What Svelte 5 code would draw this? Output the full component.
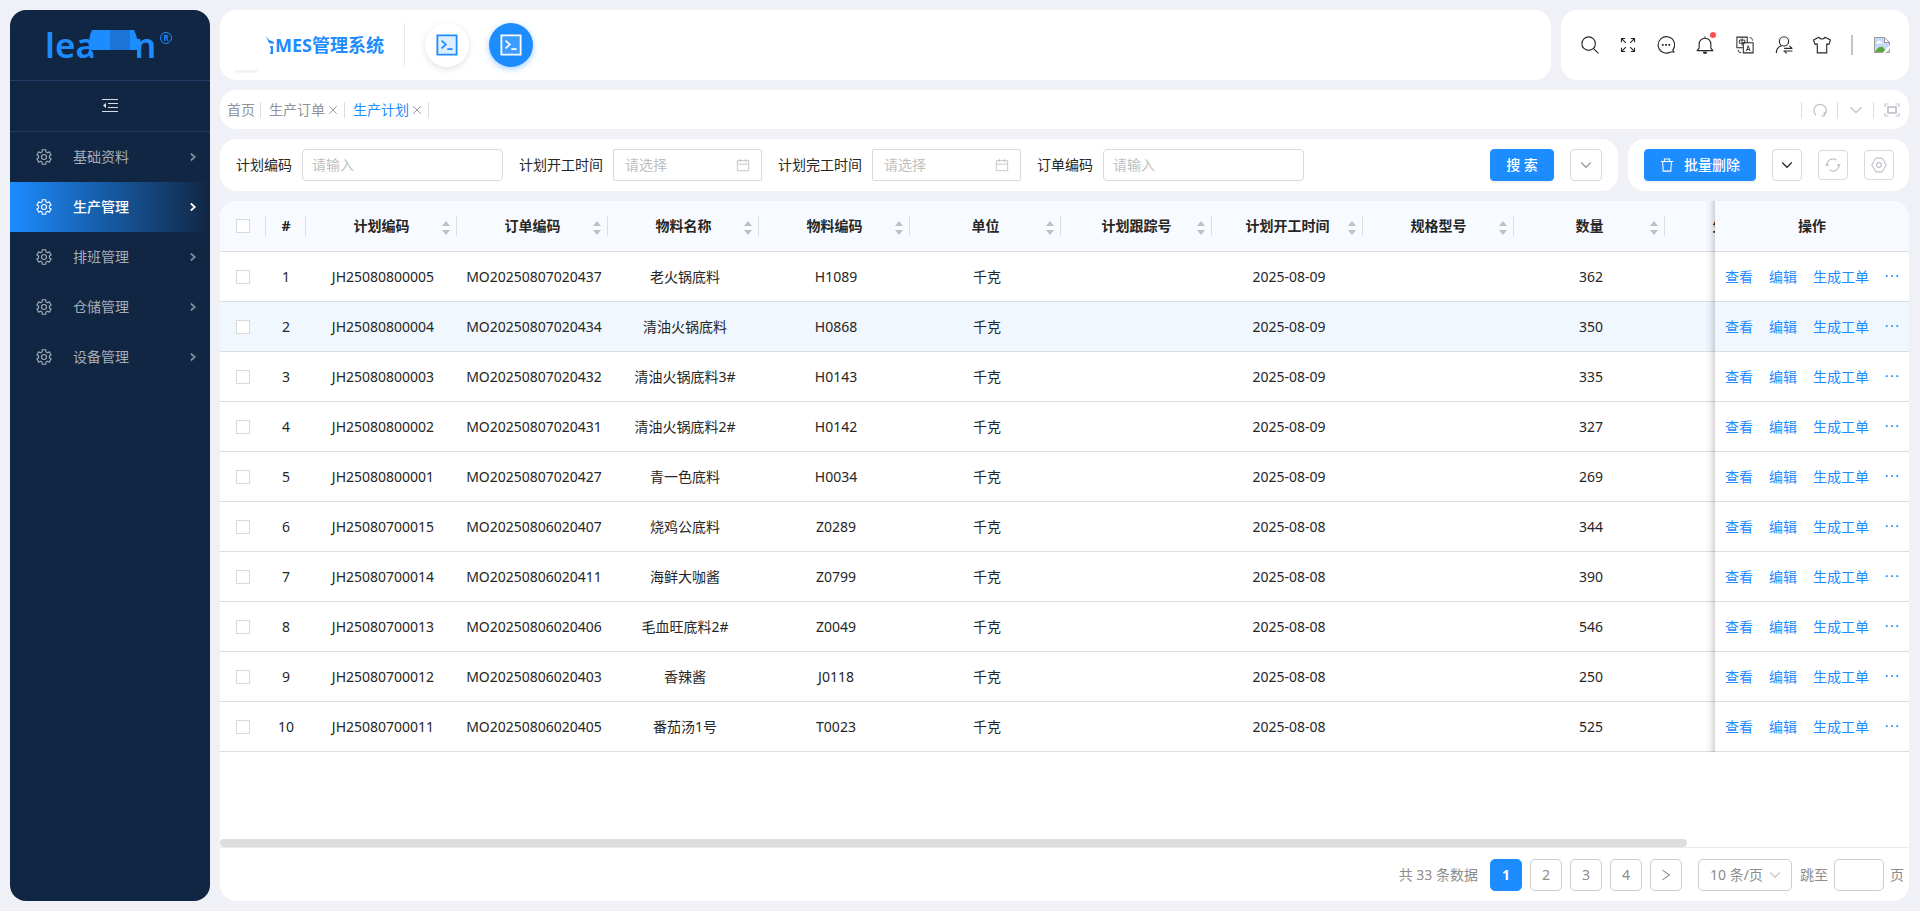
<script lang="ts">
  type IconName =
    | "gear" | "fold" | "caret" | "console" | "search" | "expand" | "message" | "bell" | "translate"
    | "user" | "shirt" | "reload" | "down" | "frame" | "calendar" | "trash" | "sync" | "hex" | "next" | "more" | "close";

  interface PlanRow {
    code: string;
    order: string;
    name: string;
    material: string;
    start: string;
    qty: number;
  }

  const menus = ["基础资料", "生产管理", "排班管理", "仓储管理", "设备管理"];
  let activeMenu = $state("生产管理");

  const tabs = [
    { title: "首页", closable: false },
    { title: "生产订单", closable: true },
    { title: "生产计划", closable: true },
  ];
  let activeTab = $state("生产计划");

  const filters = [
    { id: "plan-code", label: "计划编码", date: false },
    { id: "plan-start", label: "计划开工时间", date: true },
    { id: "plan-end", label: "计划完工时间", date: true },
    { id: "order-code", label: "订单编码", date: false },
  ];

  const tools: Array<{ icon: IconName; label: string; wide?: boolean; dot?: boolean }> = [
    { icon: "search", label: "搜索" },
    { icon: "expand", label: "全屏" },
    { icon: "message", label: "消息" },
    { icon: "bell", label: "通知", wide: true, dot: true },
    { icon: "translate", label: "语言", wide: true },
    { icon: "user", label: "切换用户" },
    { icon: "shirt", label: "主题" },
  ];

  const tabTools: Array<{ icon: IconName; label: string }> = [
    { icon: "reload", label: "刷新" },
    { icon: "down", label: "更多" },
    { icon: "frame", label: "最大化" },
  ];

  const columns = [
    "计划编码", "订单编码", "物料名称", "物料编码", "单位", "计划跟踪号", "计划开工时间", "规格型号", "数量", "生产状态", "",
  ];

  const rows: PlanRow[] = [
    { code: "JH25080800005", order: "MO20250807020437", name: "老火锅底料", material: "H1089", start: "2025-08-09", qty: 362 },
    { code: "JH25080800004", order: "MO20250807020434", name: "清油火锅底料", material: "H0868", start: "2025-08-09", qty: 350 },
    { code: "JH25080800003", order: "MO20250807020432", name: "清油火锅底料3#", material: "H0143", start: "2025-08-09", qty: 335 },
    { code: "JH25080800002", order: "MO20250807020431", name: "清油火锅底料2#", material: "H0142", start: "2025-08-09", qty: 327 },
    { code: "JH25080800001", order: "MO20250807020427", name: "青一色底料", material: "H0034", start: "2025-08-09", qty: 269 },
    { code: "JH25080700015", order: "MO20250806020407", name: "烧鸡公底料", material: "Z0289", start: "2025-08-08", qty: 344 },
    { code: "JH25080700014", order: "MO20250806020411", name: "海鲜大咖酱", material: "Z0799", start: "2025-08-08", qty: 390 },
    { code: "JH25080700013", order: "MO20250806020406", name: "毛血旺底料2#", material: "Z0049", start: "2025-08-08", qty: 546 },
    { code: "JH25080700012", order: "MO20250806020403", name: "香辣酱", material: "J0118", start: "2025-08-08", qty: 250 },
    { code: "JH25080700011", order: "MO20250806020405", name: "番茄汤1号", material: "T0023", start: "2025-08-08", qty: 525 },
  ];
  let currentRow = $state(1);
  let page = $state(1);

  // the native bar is hidden, the thumb below the table follows these
  const tableWidth = 1944;
  let viewWidth = $state(0);
  let scrollLeft = $state(0);
  const thumbWidth = $derived(Math.round((viewWidth * viewWidth) / tableWidth));
  const thumbLeft = $derived(Math.round((scrollLeft * viewWidth) / tableWidth));

  // six-toothed gear outline on a 16 grid
  function gearPath(): string {
    const pts: string[] = [];
    for (let i = 0; i < 6; i++) {
      const base = -90 + i * 60;
      for (const [deg, r] of [[-20, 5.5], [-14, 7.4], [14, 7.4], [20, 5.5]]) {
        const a = ((base + deg) * Math.PI) / 180;
        pts.push(`${(8 + r * Math.cos(a)).toFixed(2)} ${(8 + r * Math.sin(a)).toFixed(2)}`);
      }
    }
    return `M${pts.join("L")}Z`;
  }
  const gear = gearPath();
</script>

{#snippet icon(name: IconName, size = 16)}
  <svg class="icon" width={size} height={size} viewBox="0 0 16 16" fill="none" stroke="currentColor" aria-hidden="true">
    {#if name === "gear"}
      <path d={gear} stroke-linejoin="round" stroke-width="1.1" />
      <circle cx="8" cy="8" r="2.5" stroke-width="1.1" />
    {:else if name === "fold"}
      <path d="M0 1.5h16M6 5.5h10M6 9.5h10M0 13.5h16" stroke-width="1.2" />
      <path d="M4 4.8v5.4L1 7.5z" fill="currentColor" stroke="none" />
    {:else if name === "caret"}
      <path d="M5.5 4l4.5 4-4.5 4" stroke-width="2" />
    {:else if name === "console"}
      <path d="M1 1h14v14H1z" fill="currentColor" fill-opacity=".15" stroke-width="1.3" />
      <path d="M4 4.8l3.2 2.8L4 10.4M8.2 11h3.8" stroke-width="1.2" />
    {:else if name === "search"}
      <circle cx="6.8" cy="6.8" r="6" />
      <path d="M11.2 11.2l4.3 4.3" />
    {:else if name === "expand"}
      <path d="M1.500 5.200V1.500h3.700M1.700 1.700L5.800 5.800M10.800 1.500h3.700v3.700M14.300 1.700l-4.100 4.100M1.500 10.800v3.700h3.700M1.700 14.300l4.100-4.100M10.800 14.500h3.700v-3.700M14.300 14.300l-4.100-4.100" stroke-width="1.1" />
    {:else if name === "message"}
      <path d="M14 12.5A7.3 7.3 0 1 0 12 14.2h3.2z" stroke-linejoin="round" />
      <path d="M4.3 7.8h1.6M7.2 7.8h1.6M10.1 7.8h1.6" stroke-width="1.6" />
    {:else if name === "bell"}
      <path d="M1 13h14l-1.800-2.200V7.200a5.200 5.200 0 0 0-10.400 0v3.600zM8 2V.4" stroke-linejoin="round" />
      <path d="M6.400 14.200a1.600 1.600 0 0 0 3.200 0z" fill="currentColor" stroke-width=".6" />
    {:else if name === "translate"}
      <path d="M10 5.500V1H.8v9.500H6M6.500 6h8.700v9H6.500z" stroke-width=".9" />
      <path d="M5.400 2v6.500M3 3.600h4.800v2.800H3zM9.300 13.400l1.600-4.800 1.600 4.800M9.800 12h2.200M12 1.400c1.800 0 2.600.8 2.600 2.800M2 12.300c0 1.800.8 2.400 2.600 2.400" stroke-width=".8" />
    {:else if name === "user"}
      <circle cx="8" cy="4.8" r="4.1" />
      <path d="M1.2 15c0-3 1.7-5.4 4.4-6.4M15.5 11H8.2M12.8 8.8l2.2 2M7.5 13.3h8M8.4 13.5l2 1.9" />
    {:else if name === "shirt"}
      <path d="M5.3 1.2L.5 3.6l1.3 3.9 2-.5v8h8.4V7l2 .5 1.3-3.9-4.8-2.4c-.6 1-1.5 1.5-2.7 1.5s-2.1-.5-2.7-1.500z" stroke-linejoin="round" />
    {:else if name === "reload"}
      <path d="M4 13.2a6.2 6.2 0 1 1 8.3 0M12.3 9.8v4h-2.8" stroke-width="1.3" />
    {:else if name === "down"}
      <path d="M2.5 5.2L8 10.6l5.5-5.4" stroke-width="1.4" />
    {:else if name === "frame"}
      <path d="M1 5V2h3.5M11.5 2H15v3M1 11v3h3.5M11.5 14H15v-3" stroke-width="1.2" />
      <path d="M4 5.2h8v5.6H4z" stroke-width="1.8" />
    {:else if name === "calendar"}
      <path d="M1.5 3h13v11.5h-13zM1.5 7h13M5 1v3.5M11 1v3.5" />
    {:else if name === "trash"}
      <path d="M1 4h14M3 4l.6 11h8.8L13 4M5 4V1.2h6V4" stroke-width="1.2" />
    {:else if name === "sync"}
      <path d="M2 8.600a6 6 0 0 1 9.600-5.400M14 7.400a6 6 0 0 1-9.600 5.400" stroke-width="1.2" />
      <path d="M0 8.800h4.200L2 5.800zM11.800 7.200H16l-2.200 3z" fill="currentColor" stroke="none" />
    {:else if name === "hex"}
      <path d="M4.8 1.2h6.4L15.2 8l-4 6.8H4.8L.8 8z" stroke-linejoin="round" stroke-width="1.2" />
      <circle cx="8" cy="8" r="2.4" stroke-width="1.2" />
    {:else if name === "next"}
      <path d="M4 2.500L12 8l-8 5.500" stroke-width="1.2" />
    {:else if name === "more"}
      <path d="M1 7h2M7 7h2M13 7h2" stroke-width="2" />
    {:else if name === "close"}
      <path d="M3 3l10 10M13 3L3 13" stroke-width="1.3" />
    {/if}
  </svg>
{/snippet}

<div class="layout">
  <aside class="sidebar">
    <div class="logo">
      <svg width="130" height="56" viewBox="0 -8 130 56" role="img" aria-label="logo">
        <g class="logo__word">
          <text x="0" y="33">lea</text>
          <text x="89" y="33">n</text>
        </g>
        <path class="logo__cover" d="M44 24h48v12H55c-3-2-6-6-8-10z" />
        <path d="M47 5h42q4 8 5 20H45q-2-13 2-20z" fill="#1c8cff" />
        <path d="M65 5h20v20H65z" fill="#1b75d6" />
        <circle cx="121" cy="13" r="5.5" fill="none" stroke="#1c8cff" />
        <text class="logo__mark" x="121" y="16" text-anchor="middle">R</text>
      </svg>
    </div>
    <button type="button" class="sidebar__fold" aria-label="收起菜单">{@render icon("fold")}</button>
    <nav>
      {#each menus as menu (menu)}
        <button type="button" class="menu-item" class:active={activeMenu === menu} onclick={() => (activeMenu = menu)}>
          {@render icon("gear")}
          <span>{menu}</span>
          {@render icon("caret", 14)}
        </button>
      {/each}
    </nav>
  </aside>

  <main class="main">
    <header class="header">
      <div class="card header__brand">
        <div class="brand">
          <svg class="brand__mark" width="9" height="18" viewBox="0 0 9 18" aria-hidden="true">
            <path d="M0 0l3 4 5 2v1.500H5L3 7zM4 10h3v8H4l1-4z" fill="#1c8cff" />
          </svg>
          <h1>MES管理系统</h1>
        </div>
        <div class="systems">
          <button type="button" class="system" aria-label="系统一">{@render icon("console", 22)}</button>
          <button type="button" class="system system--active" aria-label="系统二">{@render icon("console", 22)}</button>
        </div>
      </div>
      <div class="card header__tools">
        {#each tools as tool (tool.icon)}
          <button type="button" class="tool" class:tool--wide={tool.wide} aria-label={tool.label}>
            {@render icon(tool.icon, tool.icon === "expand" ? 16 : 18)}
            {#if tool.dot}<i class="tool__dot"></i>{/if}
          </button>
        {/each}
        <span class="header__bar"></span>
        <svg width="18" height="18" viewBox="0 0 18 18" role="img" aria-label="头像">
          <path d="M1.500 1.500h10l5 5v10h-15z" fill="#c6d8f7" stroke="#9a9a9a" />
          <path d="M11.500 1.500v5h5z" fill="#fff" stroke="#9a9a9a" />
          <path d="M3 7.500q0-2 2-2 1-2 3 0 1.500 0 1.500 2z" fill="#fff" />
          <path d="M2 16q3-6 8-5l3 5z" fill="#58a83c" />
          <path d="M17.500 8.500L9 17.500h3l5.500-5.500z" fill="#fff" />
        </svg>
      </div>
    </header>

    <div class="card tabs">
      {#each tabs as tab (tab.title)}
        <div class="tab" class:active={activeTab === tab.title}>
          <button type="button" onclick={() => (activeTab = tab.title)}>{tab.title}</button>
          {#if tab.closable}
            <button type="button" class="tab__close" aria-label="关闭">{@render icon("close", 12)}</button>
          {/if}
        </div>
      {/each}
      <div class="tabs__tools">
        {#each tabTools as tool (tool.icon)}
          <button type="button" aria-label={tool.label}>{@render icon(tool.icon)}</button>
        {/each}
      </div>
    </div>

    <div class="bar">
      <form class="card search">
        {#each filters as filter (filter.id)}
          <div class="field">
            <label for={filter.id}>{filter.label}</label>
            <div class="field__control" class:field__control--date={filter.date}>
              <input id={filter.id} type="text" placeholder={filter.date ? "请选择" : "请输入"} />
              {#if filter.date}{@render icon("calendar", 14)}{/if}
            </div>
          </div>
        {/each}
        <div class="search__actions">
          <button type="button" class="btn btn--primary btn--search">搜 索</button>
          <button type="button" class="btn btn--square btn--muted" aria-label="展开">{@render icon("down", 14)}</button>
        </div>
      </form>
      <div class="card actions">
        <button type="button" class="btn btn--primary btn--delete">{@render icon("trash", 14)}<span>批量删除</span></button>
        <button type="button" class="btn btn--drop" aria-label="更多操作">{@render icon("down", 14)}</button>
        <button type="button" class="btn btn--small" aria-label="刷新">{@render icon("sync")}</button>
        <button type="button" class="btn btn--small" aria-label="列设置">{@render icon("hex")}</button>
      </div>
    </div>

    <section class="card list">
      <div
        class="list__scroll"
        bind:clientWidth={viewWidth}
        onscroll={(event) => (scrollLeft = event.currentTarget.scrollLeft)}
      >
        <table>
          <colgroup>
            <col class="col-check" />
            <col class="col-index" />
            {#each columns as _, i (i)}
              <col class:col-data={i < columns.length - 1} />
            {/each}
            <col class="col-action" />
          </colgroup>
          <thead>
            <tr>
              <th><input type="checkbox" aria-label="全选" /></th>
              <th>#</th>
              {#each columns as column, i (i)}
                <th>
                  {column}
                  <svg class="sorter" width="8" height="14" viewBox="0 0 8 14" aria-hidden="true">
                    <path d="M4 0l4 5H0zM4 14l4-5H0z" fill="#bfbfbf" />
                  </svg>
                </th>
              {/each}
              <th class="fixed">操作</th>
            </tr>
          </thead>
          <tbody>
            {#each rows as row, i (row.code)}
              <tr class:current={currentRow === i} onmouseenter={() => (currentRow = i)}>
                <td><input type="checkbox" aria-label={row.code} /></td>
                <td>{i + 1}</td>
                <td class="data">{row.code}</td>
                <td class="data">{row.order}</td>
                <td class="data">{row.name}</td>
                <td class="data">{row.material}</td>
                <td class="data">千克</td>
                <td></td>
                <td class="data">{row.start}</td>
                <td></td>
                <td class="data">{row.qty}</td>
                <td></td>
                <td></td>
                <td class="fixed">
                  <div class="links">
                    <a href="#view">查看</a>
                    <a href="#edit">编辑</a>
                    <a href="#work-order">生成工单</a>
                    <button type="button" aria-label="更多">{@render icon("more", 14)}</button>
                  </div>
                </td>
              </tr>
            {/each}
          </tbody>
        </table>
      </div>
      <div class="list__bar">
        <div class="list__thumb" style:width="{thumbWidth}px" style:margin-left="{thumbLeft}px"></div>
      </div>
      <footer class="pager">
        <span class="pager__total">共 33 条数据</span>
        {#each [1, 2, 3, 4] as n (n)}
          <button type="button" class="pager__page" class:active={page === n} onclick={() => (page = n)}>{n}</button>
        {/each}
        <button type="button" class="pager__page" aria-label="下一页">{@render icon("next", 14)}</button>
        <div class="pager__size">
          <select aria-label="每页条数">
            <option>10 条/页</option>
          </select>
          {@render icon("down", 14)}
        </div>
        <label class="pager__jump">跳至 <input type="text" /> 页</label>
      </footer>
    </section>
  </main>
</div>

<style>
  :global(body) {
    background: #f0f1f6;
  }

  .layout {
    --primary: #1c8cff;
    --line: #dcdddf;
    display: flex;
    gap: 10px;
    box-sizing: border-box;
    min-height: 100vh;
    padding: 10px 11px 10px 10px;
    color: #262626;
    font: 14px/22px "Noto Sans", "Noto Sans CJK SC", sans-serif;
  }

  .layout *,
  .layout *::before {
    box-sizing: border-box;
  }

  button,
  input,
  select {
    margin: 0;
    border: 0;
    padding: 0;
    background: none;
    color: inherit;
    font: inherit;
  }

  button {
    cursor: pointer;
  }

  .icon {
    display: block;
    flex: none;
  }

  .card {
    border-radius: 16px;
    background: #fff;
  }

  .sidebar {
    flex: none;
    width: 200px;
    overflow: hidden;
    border-radius: 16px;
    background: #112642;
    color: #a5adb8;
  }

  .logo {
    display: flex;
    height: 71px;
    align-items: center;
    justify-content: center;
    border-bottom: 1px solid #213f66;
  }

  .logo__word {
    fill: #1c8cff;
    font-size: 35px;
    font-weight: 600;
  }

  .logo__cover {
    fill: #112642;
  }

  .logo__mark {
    fill: #1c8cff;
    font-size: 8px;
    font-weight: 700;
  }

  .sidebar__fold {
    display: flex;
    width: 100%;
    height: 51px;
    align-items: center;
    justify-content: center;
    border-bottom: 1px solid #213f66;
    color: #d5dae1;
  }

  .menu-item {
    display: flex;
    width: 100%;
    height: 50px;
    align-items: center;
    gap: 21px;
    padding: 0 10px 0 26px;
    text-align: left;
  }

  .menu-item span {
    flex: 1;
  }

  .menu-item span + :global(.icon) {
    opacity: 0.75;
  }

  .menu-item.active {
    background: linear-gradient(90deg, #1c8cff, #112642);
    color: #fff;
    font-weight: 500;
  }

  .menu-item.active span + :global(.icon) {
    opacity: 1;
  }

  .main {
    display: flex;
    flex: 1;
    min-width: 0;
    flex-direction: column;
    gap: 10px;
  }

  .header {
    display: flex;
    gap: 10px;
    height: 70px;
  }

  .header__brand {
    position: relative;
    display: flex;
    flex: 1;
    align-items: center;
    padding: 0 16px;
  }

  .header__brand::after {
    position: absolute;
    bottom: 7px;
    left: 14px;
    width: 24px;
    height: 3px;
    border-radius: 0 0 12px 12px;
    background: #f3f4f7;
    content: "";
  }

  .brand {
    display: flex;
    align-items: center;
    height: 44px;
    border-right: 1px solid #e8e8e8;
    padding: 0 20px 0 30px;
  }

  .brand h1 {
    margin: 0;
    color: var(--primary);
    font-size: 18px;
    font-weight: 700;
    line-height: 24px;
  }

  .systems {
    display: flex;
    gap: 20px;
    padding: 0 20px;
  }

  .system {
    display: flex;
    width: 44px;
    height: 44px;
    align-items: center;
    justify-content: center;
    border-radius: 50%;
    background: #fff;
    box-shadow: 0 2px 6px rgb(0 0 0 / 12%);
    color: var(--primary);
  }

  .system--active {
    background: var(--primary);
    box-shadow: 0 2px 6px rgb(28 140 255 / 40%);
    color: #fff;
  }

  .header__tools {
    display: flex;
    align-items: center;
    gap: 20px;
    padding: 0 18px 0 20px;
  }

  .tool {
    position: relative;
    display: flex;
    width: 18px;
    justify-content: center;
    color: #262626;
  }

  .tool--wide {
    width: 20px;
  }

  .tool__dot {
    position: absolute;
    top: -4px;
    right: -1px;
    width: 6px;
    height: 6px;
    border-radius: 50%;
    background: #ff4d4f;
  }

  .header__bar {
    width: 2px;
    height: 20px;
    background: #c0c4cc;
  }

  .tabs {
    display: flex;
    height: 39px;
    align-items: center;
    padding-left: 7px;
    color: #909399;
  }

  .tab {
    display: flex;
    height: 16px;
    align-items: center;
    gap: 2px;
    margin-right: 8px;
    border-right: 1px solid var(--line);
    padding-right: 5px;
  }

  .tab__close {
    color: #999;
  }

  .tab.active > button:first-child {
    color: var(--primary);
  }

  .tabs__tools {
    display: flex;
    margin-left: auto;
    color: #c0c4cc;
  }

  .tabs__tools button {
    display: flex;
    width: 36px;
    height: 16px;
    align-items: center;
    justify-content: center;
    border-left: 1px solid var(--line);
  }

  .bar {
    display: flex;
    gap: 10px;
  }

  .search {
    display: flex;
    flex: 1;
    align-items: center;
    gap: 16px;
    padding: 10px 16px;
  }

  .field {
    display: flex;
    align-items: center;
    gap: 10px;
    white-space: nowrap;
  }

  .field__control {
    display: flex;
    width: 201px;
    height: 32px;
    align-items: center;
    border: 1px solid #d9d9d9;
    border-radius: 4px;
    padding: 0 9px;
    color: #bfbfbf;
  }

  .field__control--date {
    width: 149px;
    border-radius: 2px;
    padding: 0 11px;
  }

  .field__control input {
    flex: 1;
    min-width: 0;
    outline: 0;
    color: #262626;
  }

  .field__control input::placeholder {
    color: #bfbfbf;
  }

  .search__actions {
    display: flex;
    gap: 16px;
    margin-left: auto;
  }

  .actions {
    display: flex;
    align-items: center;
    gap: 16px;
    padding: 10px 15px 10px 16px;
  }

  .btn {
    display: flex;
    height: 32px;
    align-items: center;
    justify-content: center;
    border: 1px solid #d9d9d9;
    border-radius: 4px;
  }

  .btn--primary {
    gap: 10px;
    border-color: var(--primary);
    background: var(--primary);
    box-shadow: 0 2px 2px rgb(0 0 0 / 6%);
    color: #fff;
    font-weight: 500;
  }

  .btn--search {
    width: 64px;
  }

  .btn--delete {
    width: 112px;
  }

  .btn--square {
    width: 32px;
  }

  .btn--muted {
    color: #999;
  }

  .btn--drop {
    width: 30px;
  }

  .btn--small {
    width: 30px;
    height: 30px;
    color: #c0c4cc;
  }

  .list {
    display: flex;
    flex: 1;
    min-height: 0;
    flex-direction: column;
    overflow: hidden;
  }

  .list__scroll {
    flex: 1;
    overflow-x: auto;
    scrollbar-width: none;
  }

  table {
    width: 1944px;
    border-spacing: 0;
    table-layout: fixed;
  }

  .col-check {
    width: 46px;
  }

  .col-index {
    width: 40px;
  }

  .col-data {
    width: 151px;
  }

  .col-action {
    width: 194px;
  }

  th,
  td {
    height: 50px;
    border-bottom: 1px solid var(--line);
    padding: 0;
    background: #fff;
    text-align: center;
    white-space: nowrap;
  }

  th {
    position: relative;
    height: 51px;
    background: #f7faff;
    font-weight: 700;
  }

  th:not(.fixed)::after {
    position: absolute;
    top: 15px;
    right: 0;
    width: 1px;
    height: 20px;
    background: var(--line);
    content: "";
  }

  .data {
    padding-left: 3px;
  }

  .sorter {
    position: absolute;
    top: 20px;
    right: 7px;
  }

  .current td {
    background: #f0f7ff;
  }

  .fixed {
    position: sticky;
    right: 0;
    z-index: 1;
  }

  .fixed::before {
    position: absolute;
    top: 0;
    bottom: -1px;
    left: -10px;
    width: 10px;
    background: linear-gradient(270deg, rgb(0 0 0 / 16%), rgb(0 0 0 / 4%) 50%, transparent);
    content: "";
  }

  input[type="checkbox"] {
    display: block;
    width: 14px;
    height: 14px;
    margin: 0 auto;
    appearance: none;
    border: 1px solid #d9d9d9;
    background: #fff;
  }

  input[type="checkbox"]:checked {
    border-color: var(--primary);
    background: var(--primary);
  }

  .links {
    display: flex;
    align-items: center;
    gap: 16px;
    padding-left: 10px;
    color: var(--primary);
  }

  .links a {
    color: inherit;
    text-decoration: none;
  }

  .list__bar {
    border-bottom: 1px solid #ebebeb;
  }

  .list__thumb {
    height: 8px;
    border-radius: 4px;
    background: #dcdddf;
  }

  .pager {
    display: flex;
    height: 53px;
    align-items: center;
    justify-content: flex-end;
    gap: 8px;
    padding-right: 5px;
    color: #8c8c8c;
  }

  .pager__total {
    margin-right: 4px;
  }

  .pager__page,
  .pager__size select,
  .pager__jump input {
    height: 32px;
    border: 1px solid #ccc;
    border-radius: 5px;
  }

  .pager__page {
    display: flex;
    width: 32px;
    align-items: center;
    justify-content: center;
  }

  .pager__page.active {
    border-color: var(--primary);
    background: var(--primary);
    color: #fff;
    font-weight: 700;
  }

  .pager__size {
    position: relative;
    margin-left: 8px;
  }

  .pager__size select {
    width: 94px;
    appearance: none;
    padding-left: 11px;
  }

  .pager__size .icon {
    position: absolute;
    top: 9px;
    right: 10px;
    color: #c8c8c8;
    pointer-events: none;
  }

  .pager__jump {
    display: flex;
    align-items: center;
    gap: 6px;
  }

  .pager__jump input {
    width: 50px;
  }
</style>
